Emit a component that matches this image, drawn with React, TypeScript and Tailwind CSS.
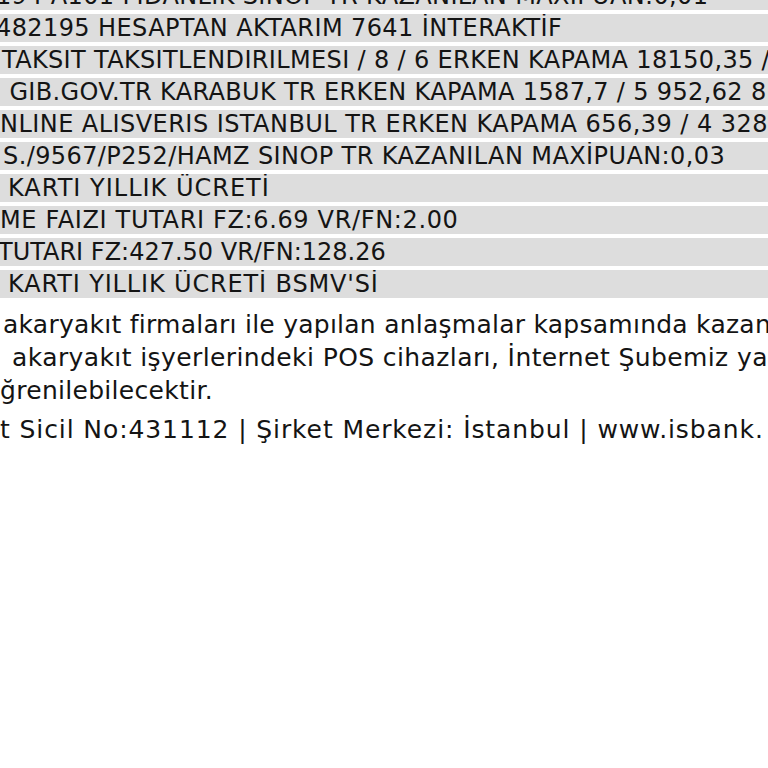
const rows: { text: string; indent: string; track: string }[] = [
  { text: "194 A101 FIDANLIK SINOP TR KAZANILAN MAXIPUAN:0,01", indent: "ml-[-4px]", track: "tracking-[0.35px]" },
  { text: "482195 HESAPTAN AKTARIM 7641 İNTERAKTİF", indent: "ml-[-4px]", track: "tracking-[0.4px]" },
  { text: "TAKSIT TAKSITLENDIRILMESI / 8 / 6 ERKEN KAPAMA 18150,35 /", indent: "ml-[2px]", track: "tracking-[0.35px]" },
  { text: "I GIB.GOV.TR KARABUK TR ERKEN KAPAMA 1587,7 / 5 952,62 8", indent: "ml-[-6px]", track: "tracking-[0.35px]" },
  { text: "NLINE ALISVERIS ISTANBUL TR ERKEN KAPAMA 656,39 / 4 328", indent: "ml-[0px]", track: "tracking-[0.45px]" },
  { text: "S./9567/P252/HAMZ SINOP TR KAZANILAN MAXİPUAN:0,03", indent: "ml-[3px]", track: "tracking-[0.4px]" },
  { text: "KARTI YILLIK ÜCRETİ", indent: "ml-[8px]", track: "tracking-[1px]" },
  { text: "ME FAIZI TUTARI FZ:6.69 VR/FN:2.00", indent: "ml-[0px]", track: "tracking-[0.65px]" },
  { text: "TUTARI FZ:427.50 VR/FN:128.26", indent: "ml-[-2px]", track: "tracking-[0px]" },
  { text: "KARTI YILLIK ÜCRETİ BSMV'Sİ", indent: "ml-[8px]", track: "tracking-[0.85px]" },
];

export default function App() {
  return (
    <div
      className="w-[768px] h-[768px] overflow-hidden bg-white text-[#141414]"
      style={{ fontFamily: "Tahoma, 'DejaVu Sans', Verdana, sans-serif" }}
    >
      {/* statement rows */}
      <div className="flex flex-col gap-[4px] mt-[-18px]">
        {rows.map((r, i) => (
          <div
            key={i}
            className="h-[28px] bg-[#dddddd] flex items-center whitespace-nowrap overflow-hidden"
          >
            <span className={`${r.indent} ${r.track} text-[24px] leading-[28px]`}>{r.text}</span>
          </div>
        ))}
      </div>

      {/* footer notes */}
      <div className="mt-[10px] text-[25px] leading-[33px] whitespace-nowrap">
        <p className="ml-[3px] tracking-[0.25px]">akaryakıt firmaları ile yapılan anlaşmalar kapsamında kazan</p>
        <p className="ml-[12px] tracking-[0.4px]">akaryakıt işyerlerindeki POS cihazları, İnternet Şubemiz ya</p>
        <p className="ml-[0px] tracking-[0.3px]">ğrenilebilecektir.</p>
        <p className="ml-[0px] mt-[6px] tracking-[0.9px]">t Sicil No:431112 | Şirket Merkezi: İstanbul | www.isbank.</p>
      </div>
    </div>
  );
}
